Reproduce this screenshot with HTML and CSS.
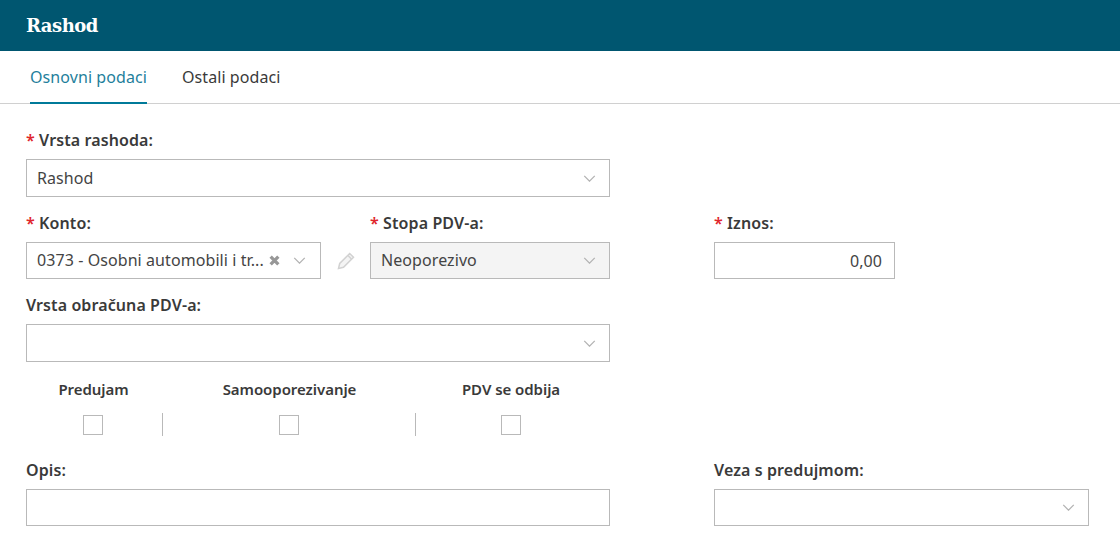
FILE: index.html
```
<!DOCTYPE html>
<html lang="hr">
<head>
<meta charset="utf-8">
<title>Rashod</title>
<link rel="stylesheet" href="styles.css">
</head>
<body>
<header class="topbar"><h1 class="title">Rashod</h1></header>
<nav class="tabs">
  <a class="tab tab-active">Osnovni podaci</a>
  <a class="tab">Ostali podaci</a>
</nav>
<main class="form">
  <div class="field wide">
    <label class="label"><span class="req">*</span> Vrsta rashoda:</label>
    <div class="control"><span class="value">Rashod</span>
      <svg class="chev" viewBox="0 0 14 8"><path d="M1 1l6 6 6-6"/></svg></div>
  </div>

  <div class="field col-konto">
    <label class="label"><span class="req">*</span> Konto:</label>
    <div class="control short raised"><span class="value">0373 - Osobni automobili i tr...</span>
      <svg class="clear" viewBox="0 0 10 10"><path d="M1.500 1.500l7 7M8.500 1.500l-7 7"/></svg>
      <svg class="chev chev-konto" viewBox="0 0 14 8"><path d="M1 1l6 6 6-6"/></svg></div>
  </div>
  <div class="pencil-cell">
    <svg class="pencil" viewBox="0 0 18 18"><path d="M1.500 16.500l1.200-5L12.700 1.500l3.800 3.800-10 10z"/><path d="M11 3.500l3.500 3.500"/></svg>
  </div>
  <div class="field col-stopa">
    <label class="label"><span class="req">*</span> Stopa PDV-a:</label>
    <div class="control short raised disabled"><span class="value">Neoporezivo</span>
      <svg class="chev" viewBox="0 0 14 8"><path d="M1 1l6 6 6-6"/></svg></div>
  </div>
  <div class="field col-right">
    <label class="label"><span class="req">*</span> Iznos:</label>
    <div class="control short amount"><span class="value">0,00</span></div>
  </div>

  <div class="field wide">
    <label class="label">Vrsta obračuna PDV-a:</label>
    <div class="control"><span class="value"></span>
      <svg class="chev" viewBox="0 0 14 8"><path d="M1 1l6 6 6-6"/></svg></div>
  </div>

  <div class="checks wide">
    <div class="check c1"><span class="check-label">Predujam</span><span class="box-wrap"><span class="box"></span></span></div>
    <div class="check c2"><span class="check-label">Samooporezivanje</span><span class="box-wrap"><span class="box"></span></span></div>
    <div class="check c3"><span class="check-label">PDV se odbija</span><span class="box-wrap"><span class="box"></span></span></div>
  </div>

  <div class="field wide">
    <label class="label">Opis:</label>
    <div class="control short"></div>
  </div>
  <div class="field col-right">
    <label class="label">Veza s predujmom:</label>
    <div class="control short"><span class="value"></span>
      <svg class="chev" viewBox="0 0 14 8"><path d="M1 1l6 6 6-6"/></svg></div>
  </div>
</main>
</body>
</html>
```
FILE: styles.css
```
* { box-sizing: border-box; }
html, body { margin: 0; padding: 0; }
body {
  background: #fff;
  color: #333;
  font-family: "Noto Sans", sans-serif;
  font-size: 16px;
  overflow: hidden;
  height: 551px;
}
.topbar {
  height: 51px;
  background: #005670;
  display: flex;
  align-items: center;
  padding-left: 26px;
}
.title {
  margin: 0;
  color: #fff;
  font-family: "DejaVu Serif", serif;
  font-size: 18px;
  font-weight: 700;
  letter-spacing: -0.5px;
}
.tabs {
  height: 53px;
  display: flex;
  gap: 35px;
  padding-left: 30px;
  border-bottom: 1px solid #d0d0d0;
}
.tab {
  height: 53px;
  line-height: 52px;
  font-size: 16px;
  letter-spacing: 0.08px;
  color: #3a3a3a;
}
.tab-active {
  color: #1f7f9c;
  border-bottom: 2px solid #007a99;
}
.form {
  display: grid;
  grid-template-columns: 295px 49px 240px 104px 375px;
  align-content: start;
  padding: 25px 0 0 26px;
}
.wide { grid-column: 1 / span 3; }
.col-konto { grid-column: 1; }
.col-stopa { grid-column: 3; }
.col-right { grid-column: 5; }
.label {
  display: block;
  height: 30px;
  line-height: 22px;
  font-size: 16px;
  font-weight: 600;
  letter-spacing: 0.1px;
  color: #3a3a3a;
}
.req { color: #e0262b; }
.control {
  height: 38px;
  margin-bottom: 15px;
  border: 1px solid #b9b9b9;
  background: #fff;
  display: flex;
  align-items: center;
  padding: 0 10px;
  font-size: 16px;
  letter-spacing: 0.08px;
  color: #444;
}
.short { height: 37px; }
.raised .value { margin-bottom: 2px; }
.value { flex: 1; white-space: nowrap; overflow: hidden; }
.chev {
  flex: none;
  width: 13px;
  height: 7px;
  margin-right: 3px;
  fill: none;
  stroke: #b3b3b3;
  stroke-width: 1.5;
}
.chev-konto { margin-left: 13px; margin-right: 4px; }
.clear {
  flex: none;
  width: 11px;
  height: 11px;
  fill: none;
  stroke: #979797;
  stroke-width: 3;
}
.disabled { background: #f4f4f4; }
.amount { width: 181px; text-align: right; padding-right: 12px; }
.pencil-cell {
  display: flex;
  align-items: flex-end;
  justify-content: center;
  padding-bottom: 24px;
}
.pencil {
  width: 18px;
  height: 18px;
  fill: #f4f4f4;
  stroke: #d2d2d2;
  stroke-width: 1.5;
}
.checks {
  display: grid;
  grid-template-columns: 137px 253px 190px;
  height: 82px;
}
.check {
  display: flex;
  flex-direction: column;
  align-items: center;
}
.check-label {
  padding-top: 2px;
  height: 36px;
  line-height: 20px;
  font-size: 15px;
  font-weight: 600;
  letter-spacing: -0.05px;
  color: #3a3a3a;
}
.c1 .check-label { margin-right: 2px; }
.box-wrap {
  align-self: stretch;
  height: 23px;
  display: flex;
  align-items: center;
  justify-content: center;
}
.c1 .box-wrap { padding-right: 2px; }
.c1 .box-wrap, .c2 .box-wrap { border-right: 1px solid #b9b9b9; }
.box {
  width: 20px;
  height: 20px;
  border: 1px solid #b9b9b9;
  background: #fff;
}
```
